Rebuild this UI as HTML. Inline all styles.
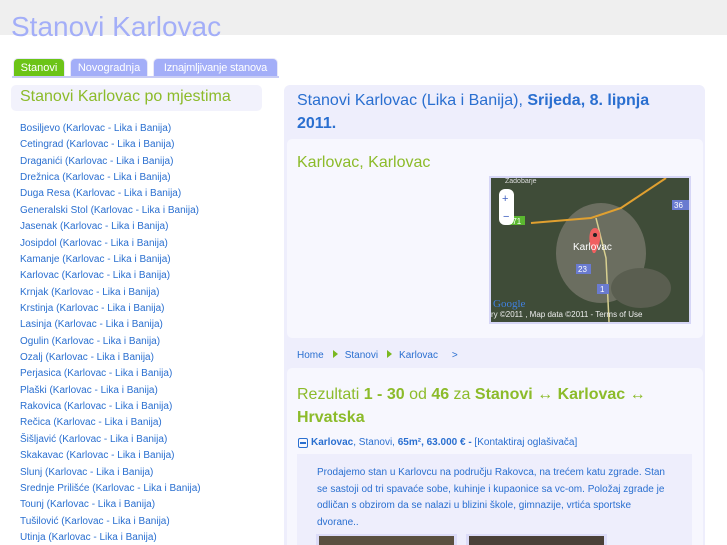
<!DOCTYPE html>
<html><head><meta charset="utf-8"><style>
*{margin:0;padding:0;box-sizing:border-box}
html,body{width:727px;height:545px;overflow:hidden}
body{background:#fff;font-family:"Liberation Sans",sans-serif;position:relative}
.band{position:absolute;left:0;top:0;width:727px;height:35px;background:#efefef}
.title{position:absolute;left:11px;top:11px;font-size:28px;color:#a3aef8;white-space:nowrap;line-height:32px}
.tab{position:absolute;top:58px;height:19px;border-radius:5px 5px 0 0;color:#fff;font-size:11px;line-height:19px;text-align:center;border:1px solid #e8e8f8;border-bottom:none;white-space:nowrap;overflow:hidden}
.tabline{position:absolute;left:12px;top:76px;width:267px;height:2px;background:#c8ccf5}
.lhead{position:absolute;left:11px;top:85px;width:251px;height:26px;background:#f2f2fc;border-radius:5px;color:#8cbb2a;font-size:16px;line-height:24px;padding-left:9px}
ul{position:absolute;left:20px;top:121px;list-style:none;font-size:10px;color:#2a6fd0;line-height:16.36px;white-space:nowrap}
.rp{position:absolute;left:284px;top:85px;width:421px;height:470px;background:#eeeefc;border-radius:6px}
.rt{position:absolute;left:297px;top:89px;width:370px;font-size:16px;line-height:23px;color:#2a6fd0}
.box{position:absolute;background:#f7f7fe;border-radius:5px}
.kk{position:absolute;left:297px;top:154px;font-size:16px;color:#8cbb2a}
.map{position:absolute;left:489px;top:176px;width:202px;height:148px;border:2px solid #d6d6f6;background:#3d4a35;overflow:hidden}
.bc{position:absolute;left:297px;top:350px;font-size:10px;color:#2a6fd0}
.bc i{display:inline-block;width:0;height:0;border-left:5px solid #7ab820;border-top:4px solid transparent;border-bottom:4px solid transparent;margin:0 7px 0 9px}
.rz{position:absolute;left:297px;top:383px;width:400px;font-size:16px;line-height:23px;color:#8cbb2a}
.ad{position:absolute;left:298px;top:437px;font-size:10px;color:#2a6fd0;white-space:nowrap}
.desc{position:absolute;left:297px;top:454px;width:395px;height:91px;background:#eeeefc}
.dt{position:absolute;left:317px;top:465px;width:352px;font-size:10px;line-height:16.5px;color:#2a6fd0}
</style></head><body>
<div class="band"></div>
<div class="title">Stanovi Karlovac</div>
<div class="tab" style="left:13px;width:52px;background:#6cc417">Stanovi</div>
<div class="tab" style="left:70px;width:78px;background:#a3aef8">Novogradnja</div>
<div class="tab" style="left:153px;width:125px;background:#a3aef8;letter-spacing:-0.2px">Iznajmljivanje stanova</div>
<div class="tabline"></div>
<div class="lhead">Stanovi Karlovac po mjestima</div>
<ul>
<li>Bosiljevo (Karlovac - Lika i Banija)</li><li>Cetingrad (Karlovac - Lika i Banija)</li><li>Draganići (Karlovac - Lika i Banija)</li><li>Drežnica (Karlovac - Lika i Banija)</li><li>Duga Resa (Karlovac - Lika i Banija)</li><li>Generalski Stol (Karlovac - Lika i Banija)</li><li>Jasenak (Karlovac - Lika i Banija)</li><li>Josipdol (Karlovac - Lika i Banija)</li><li>Kamanje (Karlovac - Lika i Banija)</li><li>Karlovac (Karlovac - Lika i Banija)</li><li>Krnjak (Karlovac - Lika i Banija)</li><li>Krstinja (Karlovac - Lika i Banija)</li><li>Lasinja (Karlovac - Lika i Banija)</li><li>Ogulin (Karlovac - Lika i Banija)</li><li>Ozalj (Karlovac - Lika i Banija)</li><li>Perjasica (Karlovac - Lika i Banija)</li><li>Plaški (Karlovac - Lika i Banija)</li><li>Rakovica (Karlovac - Lika i Banija)</li><li>Rečica (Karlovac - Lika i Banija)</li><li>Šišljavić (Karlovac - Lika i Banija)</li><li>Skakavac (Karlovac - Lika i Banija)</li><li>Slunj (Karlovac - Lika i Banija)</li><li>Srednje Prilišće (Karlovac - Lika i Banija)</li><li>Tounj (Karlovac - Lika i Banija)</li><li>Tušilović (Karlovac - Lika i Banija)</li><li>Utinja (Karlovac - Lika i Banija)</li>
</ul>
<div class="rp"></div>
<div class="rt">Stanovi Karlovac (Lika i Banija), <b>Srijeda, 8. lipnja 2011.</b></div>
<div class="box" style="left:287px;top:139px;width:416px;height:199px"></div>
<div class="kk">Karlovac, Karlovac</div>
<div class="map">
<svg width="198" height="144" viewBox="0 0 198 144">
<rect width="198" height="144" fill="#3f4c38"/>
<ellipse cx="110" cy="75" rx="45" ry="50" fill="#6b6e60"/>
<ellipse cx="150" cy="110" rx="30" ry="20" fill="#5a5e50"/>
<path d="M40 45 L100 40 L130 30 L175 0" stroke="#e0a030" stroke-width="2" fill="none"/>
<path d="M105 40 L115 80 L118 144" stroke="#d8d090" stroke-width="1.5" fill="none"/>
<rect x="14" y="38" width="20" height="9" fill="#5bb830"/><text x="16" y="46" font-size="8" fill="#fff" font-family="Liberation Sans">E71</text>
<rect x="85" y="86" width="15" height="10" fill="#6a7bd0"/><text x="87" y="94" font-size="8" fill="#fff" font-family="Liberation Sans">23</text>
<rect x="106" y="106" width="12" height="10" fill="#6a7bd0"/><text x="109" y="114" font-size="8" fill="#fff" font-family="Liberation Sans">1</text>
<rect x="181" y="22" width="17" height="10" fill="#6a7bd0"/><text x="183" y="30" font-size="8" fill="#fff" font-family="Liberation Sans">36</text>
<rect x="8" y="11" width="15" height="36" rx="6" fill="#fff"/><text x="11" y="24" font-size="11" fill="#4060c0">+</text><text x="12" y="42" font-size="11" fill="#4060c0">−</text>
<path d="M102 75 C96 62 98 50 104 50 C110 50 112 62 104 75Z" fill="#f06060"/><circle cx="104" cy="57" r="2" fill="#222"/>
<text x="82" y="72" font-size="10" fill="#fff" font-family="Liberation Sans">Karlovac</text>
<text x="14" y="5" font-size="7" fill="#ddd" font-family="Liberation Sans">Zadobarje</text>
<text x="2" y="129" font-size="11" fill="#4080e0" font-family="Liberation Serif">Google</text>
<text x="0" y="139" font-size="8" fill="#eee" font-family="Liberation Sans">ry ©2011 , Map data ©2011 - Terms of Use</text>
</svg></div>
<div class="bc">Home<i></i>Stanovi<i></i>Karlovac &nbsp; &nbsp; &gt;</div>
<div class="box" style="left:287px;top:368px;width:416px;height:190px"></div>
<div class="rz">Rezultati <b>1 - 30</b> od <b>46</b> za <b>Stanovi ↔ Karlovac ↔ Hrvatska</b></div>
<div class="ad"><span style="display:inline-block;width:10px;height:10px;border:1px solid #2a6fd0;border-radius:2px;vertical-align:-3px;margin-right:3px;background:linear-gradient(#2a6fd0,#2a6fd0) center/6px 2px no-repeat"></span><b>Karlovac</b>, Stanovi, <b>65m², 63.000 € -</b> [Kontaktiraj oglašivača]</div>
<div class="desc"></div>
<div class="dt">Prodajemo stan u Karlovcu na području Rakovca, na trećem katu zgrade. Stan se sastoji od tri spavaće sobe, kuhinje i kupaonice sa vc-om. Položaj zgrade je odličan s obzirom da se nalazi u blizini škole, gimnazije, vrtića sportske dvorane..</div>
<div style="position:absolute;left:316px;top:534px;width:141px;height:11px;background:#dcdcf8;padding:2px 3px 0"><div style="background:#5a5040;height:100%"></div></div>
<div style="position:absolute;left:466px;top:534px;width:141px;height:11px;background:#dcdcf8;padding:2px 3px 0"><div style="background:#4a4038;height:100%"></div></div>
</body></html>
